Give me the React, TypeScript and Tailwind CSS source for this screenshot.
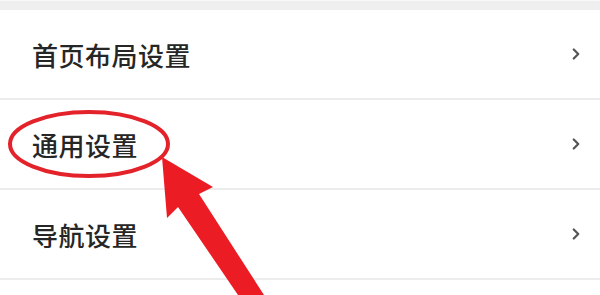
import { ChevronRight } from "lucide-react";

const items = ["首页布局设置", "通用设置", "导航设置"];

export default function App() {
  return (
    <div className="relative w-[600px] h-[295px] overflow-hidden bg-white font-['Noto_Sans_CJK_SC','Noto_Sans',sans-serif]">
      <div className="h-[10px] bg-[#efefef] border-t border-[#f8f8f8]" />
      <div className="flex flex-col">
        {items.map((label) => (
          <div
            key={label}
            className="h-[90px] flex items-center justify-between pl-[32px] pr-[15px] border-b-2 border-[#ececec]"
          >
            <span className="text-[26px] text-[#262626] font-medium tracking-[0.5px]">{label}</span>
            <ChevronRight className="w-[18px] h-[18px] text-[#555]" strokeWidth={3} />
          </div>
        ))}
      </div>

      {/* annotation overlay */}
      <svg className="absolute inset-0 pointer-events-none" width="600" height="295" viewBox="0 0 600 295">
        <ellipse cx="89" cy="144" rx="79" ry="32" fill="none" stroke="#e3222a" strokeWidth="4" />
        <polygon
          points="162,157 213,187 199,194 264,295 238,295 178,207 167,218"
          fill="#ec1c24"
        />
      </svg>
    </div>
  );
}
